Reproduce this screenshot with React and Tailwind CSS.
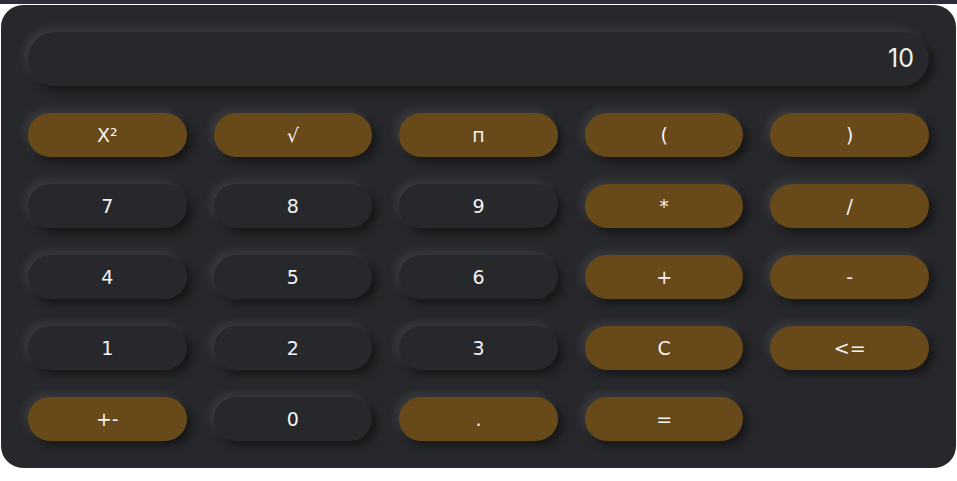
import React, { useState } from 'react';

const keys = [
  { label: 'X²', op: true },
  { label: '√', op: true },
  { label: 'п', op: true },
  { label: '(', op: true },
  { label: ')', op: true },
  { label: '7' },
  { label: '8' },
  { label: '9' },
  { label: '*', op: true },
  { label: '/', op: true },
  { label: '4' },
  { label: '5' },
  { label: '6' },
  { label: '+', op: true },
  { label: '-', op: true },
  { label: '1' },
  { label: '2' },
  { label: '3' },
  { label: 'C', op: true },
  { label: '<=', op: true },
  { label: '+-', op: true },
  { label: '0' },
  { label: '.', op: true },
  { label: '=', op: true },
];

const App = () => {
  const [value] = useState('10');

  return (
    <div className="min-h-screen bg-white">
      <div className="h-[4px] bg-[#2e2d3c]"></div>
      <div className="mx-[1px] mt-[1px] w-[955px] rounded-[22px] bg-[#27282b] p-[27px]">
        {/* Display */}
        <div className="flex h-[54px] items-center justify-end rounded-full bg-[#27282b] px-[15px] text-[25px] text-[#f2f2f2] shadow-[-4px_-4px_8px_rgba(255,255,255,0.09),5px_5px_9px_rgba(0,0,0,0.45)] [font-family:Inter,'Open_Sans',sans-serif]">
          {value}
        </div>

        {/* Keypad */}
        <div className="mt-[27px] grid grid-cols-5 gap-x-[27px] gap-y-[27px]">
          {keys.map((k) => (
            <button
              key={k.label}
              className={`flex h-[44px] items-center justify-center rounded-full text-[19px] font-medium text-[#f4f4f4] shadow-[-4px_-4px_8px_rgba(255,255,255,0.09),5px_5px_9px_rgba(0,0,0,0.45)] [font-family:'DejaVu_Sans',sans-serif] ${
                k.op ? 'bg-[#684919]' : 'bg-[#27282b]'
              }`}
            >
              {k.label}
            </button>
          ))}
        </div>
      </div>
    </div>
  );
};

export default App;
